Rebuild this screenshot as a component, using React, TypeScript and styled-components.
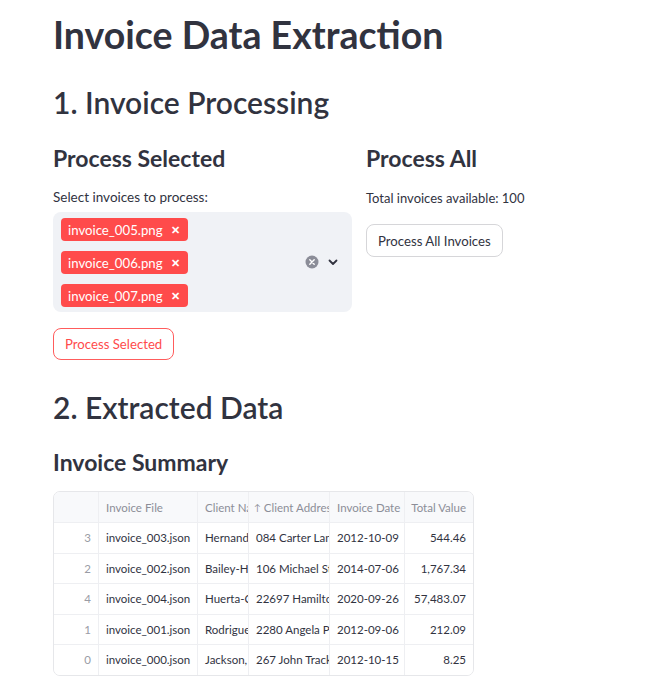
import React from "react";
import styled, { createGlobalStyle } from "styled-components";

const GlobalStyle = createGlobalStyle`
  html, body { margin: 0; padding: 0; background: #ffffff; }
  body {
    font-family: Lato, "Liberation Sans", sans-serif;
    color: #31333f;
    -webkit-font-smoothing: antialiased;
  }
  * { box-sizing: border-box; }
`;

const Main = styled.main`
  width: 667px;
  padding: 12px 53px 20px 53px;
  display: flex;
  flex-direction: column;
`;

const H1 = styled.h1`
  margin: 0;
  font-size: 37.5px;
  line-height: 46px;
  font-weight: 700;
`;

const H2 = styled.h2<{ $top: number }>`
  margin: ${(p) => p.$top}px 0 0 0;
  font-size: 30px;
  line-height: 40px;
  font-weight: 600;
`;

const H3 = styled.h3<{ $top?: number }>`
  margin: ${(p) => p.$top ?? 0}px 0 0 0;
  font-size: 23px;
  line-height: 30px;
  font-weight: 700;
`;

const Columns = styled.div`
  display: grid;
  grid-template-columns: 299px 248px;
  column-gap: 14px;
  margin-top: 21px;
`;

const Column = styled.div`
  display: flex;
  flex-direction: column;
`;

const Label = styled.div`
  margin-top: 16px;
  font-size: 13.5px;
  line-height: 16px;
`;

const Text = styled.div`
  margin-top: 17px;
  font-size: 13px;
  line-height: 16px;
`;

const Select = styled.div`
  margin-top: 7px;
  background: #f0f2f6;
  border-radius: 8px;
  height: 100px;
  padding: 6px 8px;
  display: flex;
  align-items: center;
`;

const Tags = styled.div`
  flex: 1;
  display: flex;
  flex-direction: column;
  align-items: flex-start;
  gap: 10px;
  align-self: flex-start;
`;

const Tag = styled.span`
  display: inline-flex;
  align-items: center;
  gap: 8px;
  height: 23px;
  padding: 0 8px 0 7px;
  background: #ff4b4b;
  color: #ffffff;
  border-radius: 4px;
  font-size: 13.2px;
`;

const TagX = styled.span`
  font-size: 11px;
  line-height: 1;
  font-weight: 700;
`;

const Controls = styled.div`
  display: flex;
  align-items: center;
  gap: 7px;
  margin-right: 4px;
`;

const Button = styled.button<{ $primary?: boolean }>`
  align-self: flex-start;
  font-family: inherit;
  font-size: 13.2px;
  background: #ffffff;
  border-radius: 8px;
  height: ${(p) => (p.$primary ? "32px" : "33px")};
  padding: 0 11px;
  color: ${(p) => (p.$primary ? "#ff4b4b" : "#31333f")};
  border: 1px solid ${(p) => (p.$primary ? "#ff5c5c" : "#d6d6d9")};
  margin-top: ${(p) => (p.$primary ? "16px" : "18px")};
  cursor: pointer;
`;

const Table = styled.div`
  margin-top: 14px;
  width: 421px;
  border: 1px solid #e6e7ea;
  border-radius: 7px;
  overflow: hidden;
  font-size: 11.5px;
`;

const Row = styled.div<{ $head?: boolean }>`
  display: grid;
  grid-template-columns: 44px 99px 51px 81px 75px 69px;
  height: ${(p) => (p.$head ? "30px" : "30.5px")};
  background: ${(p) => (p.$head ? "#f8f9fb" : "#ffffff")};
  color: ${(p) => (p.$head ? "#8c8e98" : "#31333f")};
  & + & { border-top: 1px solid #eeeff2; }
`;

const Cell = styled.div<{ $align?: "left" | "right"; $muted?: boolean; $pad?: number }>`
  padding: 0 7px 0 ${(p) => p.$pad ?? 7}px;
  display: flex;
  align-items: center;
  justify-content: ${(p) => (p.$align === "right" ? "flex-end" : "flex-start")};
  white-space: nowrap;
  overflow: hidden;
  color: ${(p) => (p.$muted ? "#9a9ca5" : "inherit")};
  & + & { border-left: 1px solid #eeeff2; }
`;

const SortArrow = styled.span`
  font-size: 9px;
  margin-right: 3px;
`;

const rows = [
  ["3", "invoice_003.json", "Hernandez", "084 Carter Lane", "2012-10-09", "544.46"],
  ["2", "invoice_002.json", "Bailey-Hill", "106 Michael St", "2014-07-06", "1,767.34"],
  ["4", "invoice_004.json", "Huerta-Cruz", "22697 Hamilton", "2020-09-26", "57,483.07"],
  ["1", "invoice_001.json", "Rodriguez", "2280 Angela Pl", "2012-09-06", "212.09"],
  ["0", "invoice_000.json", "Jackson, J", "267 John Track", "2012-10-15", "8.25"],
];

export default function App() {
  return (
    <>
      <GlobalStyle />
      <Main>
        <H1>Invoice Data Extraction</H1>
        <H2 $top={24}>1. Invoice Processing</H2>
        <Columns>
          <Column>
            <H3>Process Selected</H3>
            <Label>Select invoices to process:</Label>
            <Select>
              <Tags>
                {["invoice_005.png", "invoice_006.png", "invoice_007.png"].map((t) => (
                  <Tag key={t}>
                    {t}
                    <TagX>✕</TagX>
                  </Tag>
                ))}
              </Tags>
              <Controls>
                <svg width="14" height="14" viewBox="0 0 14 14">
                  <circle cx="7" cy="7" r="6.5" fill="#8b8d98" />
                  <path d="M4.8 4.8 L9.2 9.2 M9.2 4.8 L4.8 9.2" stroke="#fff" strokeWidth="1.4" strokeLinecap="round" />
                </svg>
                <svg width="14" height="14" viewBox="0 0 14 14">
                  <path d="M3.5 5.5 L7 9 L10.5 5.5" fill="none" stroke="#31333f" strokeWidth="1.8" strokeLinecap="round" strokeLinejoin="round" />
                </svg>
              </Controls>
            </Select>
            <Button $primary>Process Selected</Button>
          </Column>
          <Column>
            <H3>Process All</H3>
            <Text>Total invoices available: 100</Text>
            <Button>Process All Invoices</Button>
          </Column>
        </Columns>
        <H2 $top={27}>2. Extracted Data</H2>
        <H3 $top={20}>Invoice Summary</H3>
        <Table>
          <Row $head>
            <Cell />
            <Cell>Invoice File</Cell>
            <Cell>Client Name</Cell>
            <Cell $pad={5}>
              <SortArrow>↑</SortArrow>Client Address
            </Cell>
            <Cell>Invoice Date</Cell>
            <Cell $align="right">Total Value</Cell>
          </Row>
          {rows.map((r) => (
            <Row key={r[0]}>
              <Cell $align="right" $muted>{r[0]}</Cell>
              <Cell>{r[1]}</Cell>
              <Cell>{r[2]}</Cell>
              <Cell>{r[3]}</Cell>
              <Cell>{r[4]}</Cell>
              <Cell $align="right">{r[5]}</Cell>
            </Row>
          ))}
        </Table>
      </Main>
    </>
  );
}
